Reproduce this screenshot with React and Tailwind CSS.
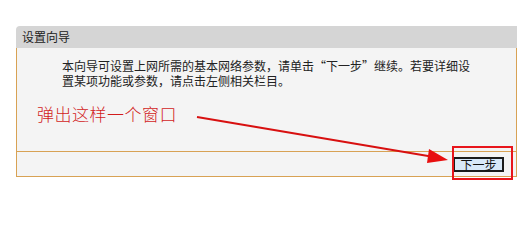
import React from 'react';

export default function App() {
    return (
        <div
            className="relative w-[528px] h-[225px] bg-white pt-[26px] pl-[16px]"
            style={{ fontFamily: '"Noto Sans CJK SC", "Noto Sans", sans-serif' }}>
            <div className="w-[501px]">
                <div className="h-[22px] bg-[#d5d5d5] rounded-tl-[4px] flex items-center pl-[6px] text-[12px] text-[#222]">
                    设置向导
                </div>
                <div className="bg-[#f4f4f4] border-x border-b border-[#d8a254]">
                    <div className="h-[103px] pt-[10px]">
                        <div className="pl-[45px] text-[12px] leading-[16px] text-[#222]">
                            <div>本向导可设置上网所需的基本网络参数，请单击“下一步”继续。若要详细设</div>
                            <div className="-mt-px">置某项功能或参数，请点击左侧相关栏目。</div>
                        </div>
                        <div className="pl-[20px] mt-[15px] text-[17px] leading-[20px] font-light text-[#d21c1c] tracking-[0.5px]">
                            弹出这样一个窗口
                        </div>
                    </div>
                    <div className="h-[25px] border-t border-[#d8a254] flex items-center justify-end pr-[12px]">
                        <button className="h-[15px] w-[51px] p-0 bg-[#d8e8f8] border-2 border-[#1b1b1b] flex items-center justify-center overflow-visible text-[12px] leading-[11px] text-[#111]">
                            下一步
                        </button>
                    </div>
                </div>
            </div>

            {/* annotation overlay */}
            <div className="absolute left-[452px] top-[146px] w-[61px] h-[34px] border-2 border-[#e8151b]" />
            <svg
                className="absolute left-0 top-0"
                width="528"
                height="225"
                viewBox="0 0 528 225">
                <line x1="197" y1="117" x2="434" y2="157" stroke="#d81010" strokeWidth="2" />
                <polygon points="448,160 429,149 427,163" fill="#e80f0f" />
            </svg>
        </div>
    );
}
